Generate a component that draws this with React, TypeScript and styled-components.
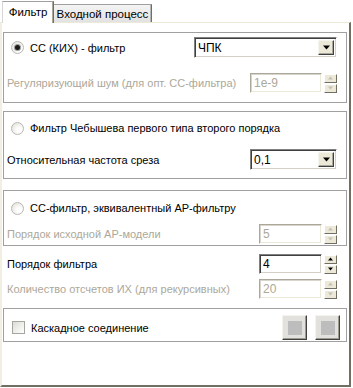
import React from "react";
import styled, { createGlobalStyle } from "styled-components";

const GlobalStyle = createGlobalStyle`
  html, body {
    margin: 0;
    padding: 0;
    background: #fff;
  }
  body {
    font-family: "Liberation Sans", Arial, sans-serif;
    font-size: 11px;
    color: #000;
  }
`;

const Window = styled.div`
  width: 351px;
  height: 388px;
  display: flex;
  flex-direction: column;
`;

const TabRow = styled.div`
  display: flex;
  align-items: flex-end;
  height: 22px;
  padding-left: 2px;
`;

const Tab = styled.div<{ $active?: boolean }>`
  box-sizing: border-box;
  display: flex;
  align-items: center;
  justify-content: center;
  position: relative;
  z-index: ${({ $active }) => ($active ? 1 : 0)};
  height: ${({ $active }) => ($active ? 22 : 18)}px;
  margin-bottom: ${({ $active }) => ($active ? -1 : 0)}px;
  width: ${({ $active }) => ($active ? 52 : 98)}px;
  padding-bottom: ${({ $active }) => ($active ? 2 : 0)}px;
  font-size: 11.5px;
  white-space: nowrap;
  background: ${({ $active }) =>
    $active ? "#fff" : "linear-gradient(#f4f4f4, #e2e2e2)"};
  border-top: 1px solid #a0a0a0;
  border-left: ${({ $active }) => ($active ? "1px solid #d8d8d8" : "none")};
  border-right: 1px solid #716f64;
  box-shadow: ${({ $active }) =>
    $active ? "inset -1px 0 #aca899" : "inset -1px 0 #b8b8b8"};
`;

const Panel = styled.div`
  box-sizing: border-box;
  width: 351px;
  height: 365px;
  border-top: 1px solid #ece9d8;
  border-left: 2px solid #f1efe2;
  border-right: 2px solid #716f64;
  border-bottom: 2px solid #716f64;
  padding: 9px 2px 0 1px;
  display: flex;
  flex-direction: column;
  background: #fff;
`;

const GroupBox = styled.div<{ $mt: number; $pb: number }>`
  border: 1px solid #a0a0a0;
  margin-top: ${({ $mt }) => $mt}px;
  padding: 0 9px ${({ $pb }) => $pb}px 3px;
  display: flex;
  flex-direction: column;
`;

const Row = styled.div<{ $h: number; $mt: number; $outside?: boolean }>`
  display: flex;
  align-items: center;
  justify-content: space-between;
  height: ${({ $h }) => $h}px;
  margin-top: ${({ $mt }) => $mt}px;
  padding: ${({ $outside }) => ($outside ? "0 10px 0 4px" : "0")};
`;

const Label = styled.span<{ $disabled?: boolean }>`
  color: ${({ $disabled }) => ($disabled ? "#aca899" : "#000")};
  white-space: nowrap;
`;

const Choice = styled.label`
  display: flex;
  align-items: center;
  gap: 6px;
  margin-left: 4px;
  white-space: nowrap;
`;

const Radio = styled.span<{ $checked?: boolean }>`
  box-sizing: border-box;
  width: 13px;
  height: 13px;
  border-radius: 50%;
  border: 1px solid #b9b9b2;
  background: radial-gradient(circle at 65% 65%, #fff 20%, #dcdcd6 100%);
  display: flex;
  align-items: center;
  justify-content: center;

  &::after {
    content: "";
    width: 5px;
    height: 5px;
    border-radius: 50%;
    background: #1a1a1a;
    box-shadow: 0 0 0 1px #9a9a9a;
    display: ${({ $checked }) => ($checked ? "block" : "none")};
  }
`;

const CheckBox = styled.span`
  box-sizing: border-box;
  width: 13px;
  height: 13px;
  border: 1px solid #a6a6a0;
  background: linear-gradient(135deg, #dcdcd6, #fff);
  margin-left: 1px;
`;

const Combo = styled.div<{ $w: number }>`
  box-sizing: border-box;
  width: ${({ $w }) => $w}px;
  height: 21px;
  border: 1px solid;
  border-color: #808080 #fff #fff #808080;
  box-shadow: inset 1px 1px #404040, inset -1px -1px #d4d0c8;
  background: #fff;
  display: flex;
  align-items: center;
  padding: 2px;
`;

const ComboText = styled.span`
  flex: 1;
  padding-left: 1px;
  font-size: 12px;
`;

const ArrowButton = styled.span`
  box-sizing: border-box;
  width: 16px;
  height: 15px;
  background: #ece9d8;
  border: 1px solid;
  border-color: #f4f3ee #404040 #404040 #f4f3ee;
  box-shadow: inset -1px -1px #aca899;
  display: flex;
  align-items: center;
  justify-content: center;
`;

const Field = styled.div`
  display: flex;
  align-items: center;
  gap: 2px;
`;

const Input = styled.div<{ $w: number; $disabled?: boolean }>`
  box-sizing: border-box;
  width: ${({ $w }) => $w}px;
  height: 20px;
  border: 1px solid;
  border-color: ${({ $disabled }) =>
    $disabled ? "#aca899 #fff #fff #aca899" : "#808080 #fff #fff #808080"};
  box-shadow: ${({ $disabled }) =>
    $disabled
      ? "inset 1px 1px #d8d6cc, inset -1px -1px #ece9d8"
      : "inset 1px 1px #404040, inset -1px -1px #d4d0c8"};
  background: #fff;
  color: ${({ $disabled }) => ($disabled ? "#aca899" : "#000")};
  font-size: 12px;
  display: flex;
  align-items: center;
  padding-left: 3px;
`;

const Spinner = styled.div`
  display: flex;
  flex-direction: column;
  gap: 1px;
  width: 13px;
  height: 19px;
`;

const SpinButton = styled.span`
  box-sizing: border-box;
  flex: 1;
  background: #ece9d8;
  border: 1px solid;
  border-color: #fff #716f64 #716f64 #fff;
  display: flex;
  align-items: center;
  justify-content: center;
`;

const SquareButtons = styled.div`
  display: flex;
  gap: 8px;
  margin-right: -3px;
`;

const SquareButton = styled.span`
  box-sizing: border-box;
  width: 25px;
  height: 25px;
  background: #e2e1dd;
  border: 1px solid;
  border-color: #f4f3ee #404040 #404040 #f4f3ee;
  box-shadow: inset -1px -1px #9d9b90;
  display: flex;
  align-items: center;
  justify-content: center;

  &::after {
    content: "";
    width: 14px;
    height: 14px;
    background: #bdbdbd;
  }
`;

const Triangle: React.FC<{ up?: boolean; size?: number; color?: string }> = ({
  up,
  size = 7,
  color = "#000",
}) => (
  <svg width={size} height={Math.ceil(size / 2) + 1} viewBox="0 0 7 4">
    <polygon points={up ? "3.5,0 7,4 0,4" : "0,0 7,0 3.5,4"} fill={color} />
  </svg>
);

const ComboBox: React.FC<{ width: number; value: string }> = ({ width, value }) => (
  <Combo $w={width}>
    <ComboText>{value}</ComboText>
    <ArrowButton>
      <Triangle />
    </ArrowButton>
  </Combo>
);

const NumberField: React.FC<{ width: number; value: string; disabled?: boolean }> = ({
  width,
  value,
  disabled,
}) => {
  const arrow = disabled ? "#c4c1b4" : "#000";
  return (
    <Field>
      <Input $w={width} $disabled={disabled}>
        {value}
      </Input>
      <Spinner>
        <SpinButton>
          <Triangle up size={5} color={arrow} />
        </SpinButton>
        <SpinButton>
          <Triangle size={5} color={arrow} />
        </SpinButton>
      </Spinner>
    </Field>
  );
};

export default function App() {
  return (
    <>
      <GlobalStyle />
      <Window>
        <TabRow>
          <Tab $active>Фильтр</Tab>
          <Tab>Входной процесс</Tab>
        </TabRow>
        <Panel>
          <GroupBox $mt={0} $pb={9}>
            <Row $h={21} $mt={4}>
              <Choice>
                <Radio $checked />
                СС (КИХ) - фильтр
              </Choice>
              <ComboBox width={143} value="ЧПК" />
            </Row>
            <Row $h={20} $mt={15}>
              <Label $disabled>Регуляризующий шум (для опт. СС-фильтра)</Label>
              <NumberField width={72} value="1e-9" disabled />
            </Row>
          </GroupBox>

          <GroupBox $mt={8} $pb={8}>
            <Row $h={16} $mt={8}>
              <Choice>
                <Radio />
                Фильтр Чебышева первого типа второго порядка
              </Choice>
            </Row>
            <Row $h={21} $mt={13}>
              <Label>Относительная частота среза</Label>
              <ComboBox width={87} value="0,1" />
            </Row>
          </GroupBox>

          <GroupBox $mt={11} $pb={1}>
            <Row $h={16} $mt={9}>
              <Choice>
                <Radio />
                СС-фильтр, эквивалентный АР-фильтру
              </Choice>
            </Row>
            <Row $h={20} $mt={8}>
              <Label $disabled>Порядок исходной АР-модели</Label>
              <NumberField width={63} value="5" disabled />
            </Row>
          </GroupBox>

          <Row $h={20} $mt={8} $outside>
            <Label>Порядок фильтра</Label>
            <NumberField width={63} value="4" />
          </Row>
          <Row $h={20} $mt={5} $outside>
            <Label $disabled>Количество отсчетов ИХ (для рекурсивных)</Label>
            <NumberField width={63} value="20" disabled />
          </Row>

          <GroupBox $mt={9} $pb={1}>
            <Row $h={25} $mt={6}>
              <Choice>
                <CheckBox />
                Каскадное соединение
              </Choice>
              <SquareButtons>
                <SquareButton />
                <SquareButton />
              </SquareButtons>
            </Row>
          </GroupBox>
        </Panel>
      </Window>
    </>
  );
}
